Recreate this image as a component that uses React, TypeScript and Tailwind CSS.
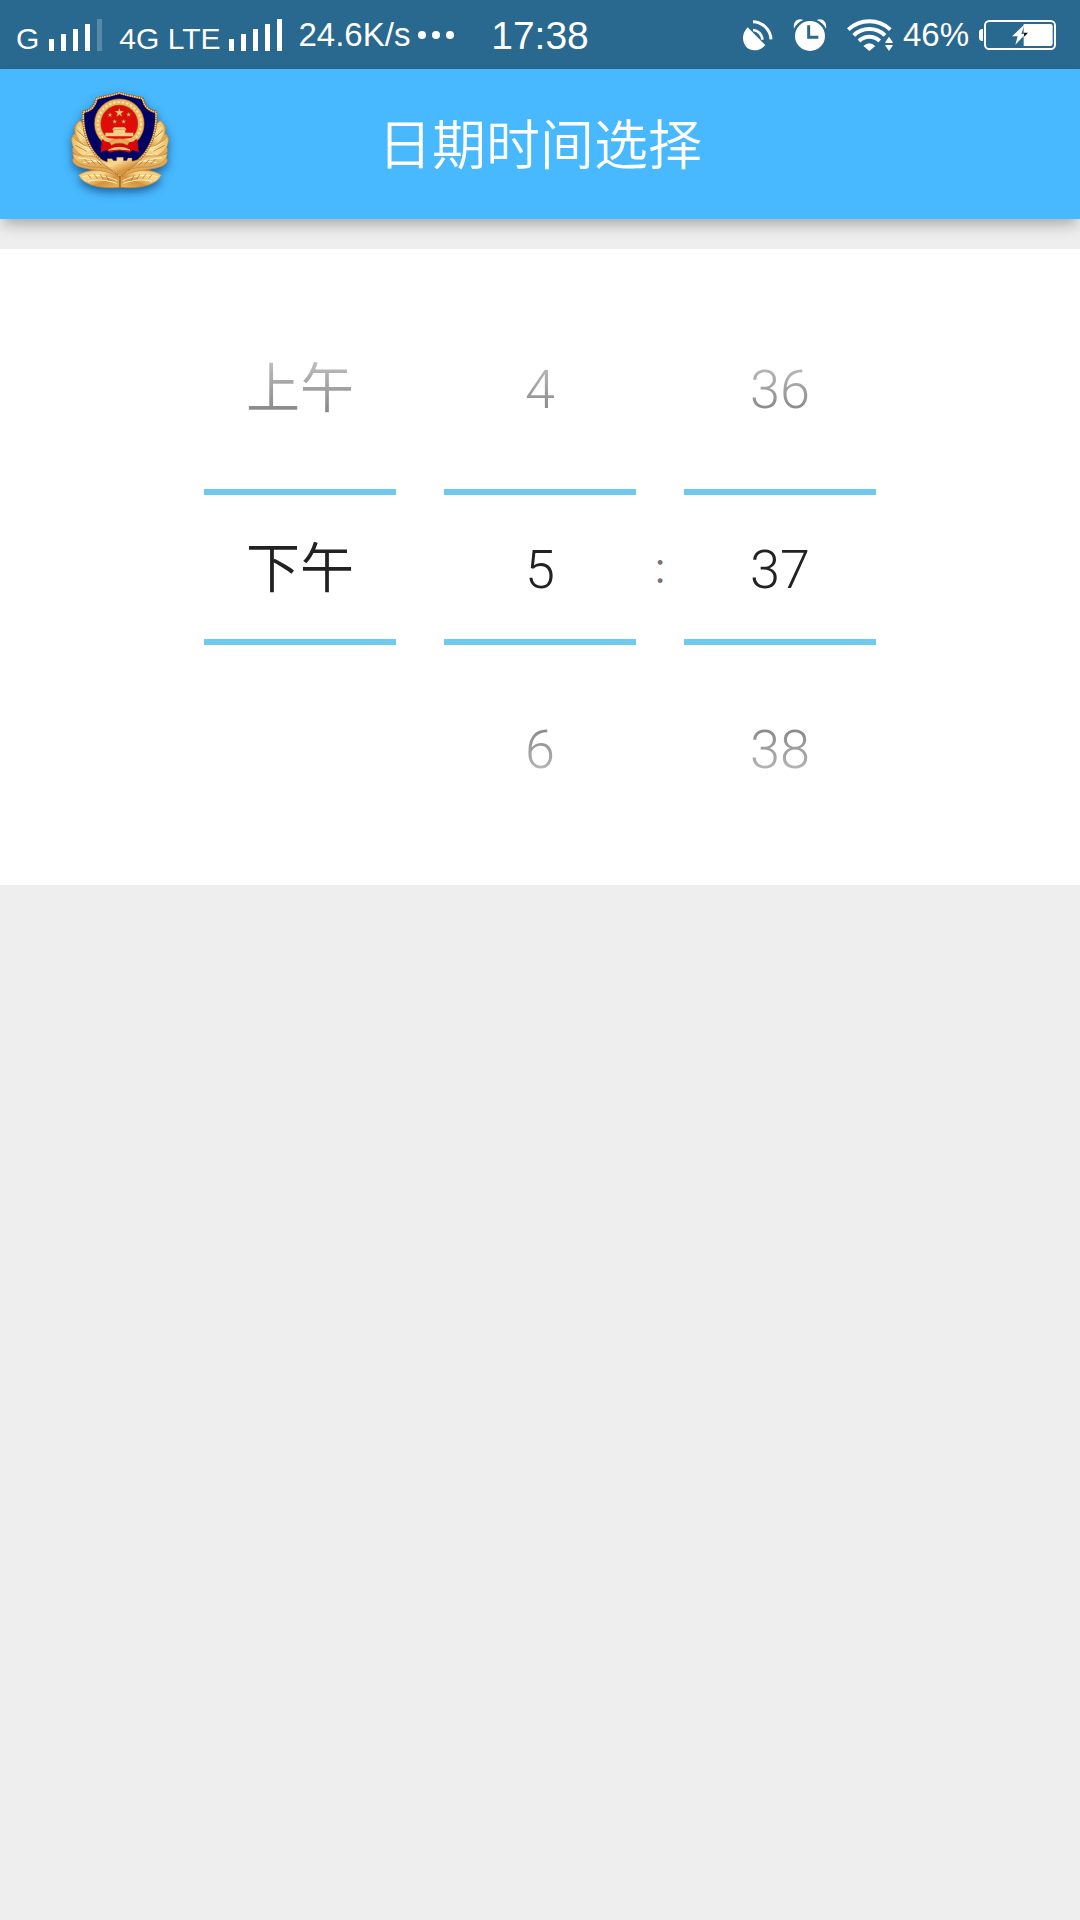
import React, { useState } from "react";

function SignalBars({ dimLast = false }: { dimLast?: boolean }) {
  return (
    <svg viewBox="0 0 54 32" className="h-8 w-[54px] shrink-0" fill="#fff" aria-hidden="true">
      <rect x="0" y="20" width="5" height="12" />
      <rect x="12" y="15" width="5" height="17" />
      <rect x="24" y="10" width="5" height="22" />
      <rect x="36" y="5" width="5" height="27" />
      <rect x="48" y="0" width="5" height="32" fillOpacity={dimLast ? 0.22 : 1} />
    </svg>
  );
}

function DishIcon() {
  return (
    <svg viewBox="0 0 90 96" className="h-8 w-[30px] shrink-0" aria-hidden="true">
      <path d="M14 25 L67 78 C50 98 24 98 10 84 C-4 68 -4 44 14 25Z" fill="#fff" />
      <path d="M30 33 A30 30 0 0 1 58 62" fill="none" stroke="#fff" strokeWidth="8" />
      <path d="M30 8 A56 56 0 0 1 84 61" fill="none" stroke="#fff" strokeWidth="9" />
    </svg>
  );
}

function AlarmIcon() {
  return (
    <svg viewBox="0 0 102 96" className="h-8 w-[34px] shrink-0" aria-hidden="true">
      <circle cx="51" cy="51" r="45" fill="#fff" />
      <path d="M47 19v36h29" fill="none" stroke="#29688f" strokeWidth="9" />
      <path d="M3 29 C-1 8 14 -4 31 3 C18 8 9 17 3 29Z" fill="#fff" />
      <path d="M99 29 C103 8 88 -4 71 3 C84 8 93 17 99 29Z" fill="#fff" />
    </svg>
  );
}

function WifiIcon() {
  return (
    <svg viewBox="0 0 138 96" className="h-8 w-[46px] shrink-0" aria-hidden="true">
      <g fill="none" stroke="#fff" strokeWidth="12">
        <path d="M4 32 A92 92 0 0 1 130 32" />
        <path d="M20 49 A68 68 0 0 1 114 49" />
        <path d="M36 66 A44 44 0 0 1 98 66" />
      </g>
      <path d="M49 81 Q67 64 85 81 L67 96Z" fill="#fff" />
      <path d="M126 53 L137 69 V72 H115 V69Z M115 78 H137 V80 L126 96 L115 80Z" fill="#fff" />
    </svg>
  );
}

function BatteryIcon() {
  return (
    <svg viewBox="0 0 231 90" className="h-[30px] w-[77px] shrink-0" aria-hidden="true">
      <path d="M12 27 V63 Q0 63 0 53 V37 Q0 27 12 27Z" fill="#fff" />
      <rect x="18" y="3" width="210" height="84" rx="13" fill="none" stroke="#fff" strokeWidth="6" />
      <path d="M134 12 H214 Q221 12 221 19 V71 Q221 78 214 78 H134Z" fill="#fff" />
      <path d="M134 16 L99 49 H116 L109 74 L140 42 H127 L136 16Z" fill="#fff" />
      <path d="M134 38 H147 L136 50Z" fill="#111" />
    </svg>
  );
}

function Star({ x, y, r }: { x: number; y: number; r: number }) {
  const points = Array.from({ length: 10 }, (_, i) => {
    const a = -Math.PI / 2 + (i * Math.PI) / 5;
    const d = i % 2 ? r * 0.4 : r;
    return `${x + d * Math.cos(a)},${y + d * Math.sin(a)}`;
  }).join(" ");
  return <polygon points={points} fill="#f0c070" stroke="#8a4410" strokeWidth="1" />;
}

const wing = (
  <g stroke="#c98a3a" strokeWidth="2">
    <path d="M90 152 C72 164 72 176 76 190 C62 200 62 214 74 226 C62 240 66 250 84 258 C60 262 64 282 88 290 C130 304 180 300 208 324 C200 280 150 220 104 176Z" fill="#e2a854" />
    <path d="M90 152 C70 168 72 190 88 212 C104 232 140 250 160 262 L120 180Z" fill="url(#gold)" />
    <path d="M68 197 C58 222 76 248 104 260 C140 272 180 290 206 318 C190 270 140 232 104 226 C90 220 76 212 68 197Z" fill="url(#gold)" />
    <path d="M68 250 C72 284 110 292 150 292 C178 294 196 304 208 322 C196 280 150 258 110 258 C92 258 76 256 68 250Z" fill="url(#goldDeep)" />
    <path d="M86 316 C110 296 164 296 208 322 V352 C160 356 104 350 86 316Z" fill="url(#gold)" />
    <g fill="none" stroke="#fff2c0" strokeWidth="3">
      <path d="M84 172l22 20 M82 188l28 22 M80 216l30 18 M94 240l40 -2 M112 254l38 -4" />
      <path d="M84 264c36 2 80 10 112 36 M100 278c26 -6 44 -6 62 0" />
      <path d="M98 320c34 -8 70 -4 104 12 M114 334c28 -8 56 -4 86 6" />
    </g>
    <g fill="none" stroke="#a8651c" strokeWidth="2">
      <path d="M80 180l24 22 M76 226l34 18 M104 268l14 14 M122 268l14 16 M140 272l14 14" />
      <path d="M114 314l10 12 M132 312l10 14 M150 312l10 16 M168 316l8 16" />
    </g>
  </g>
);

const shield =
  "M208 69 C188 76 162 80 140 86 C136 108 124 122 100 126 C98 160 104 200 122 232 C140 268 180 292 209 318 C238 292 278 268 296 232 C314 200 320 160 318 126 C294 122 282 108 278 86 C256 80 230 76 208 69Z";

function PoliceEmblem() {
  return (
    <svg
      viewBox="60 60 300 300"
      className="mb-2 size-[100px] shrink-0 overflow-visible drop-shadow-[0_4px_4px_rgba(0,40,90,0.6)]"
      role="img"
      aria-label="警徽"
    >
      <defs>
        <linearGradient id="gold" x1="0" y1="0" x2="1" y2="1">
          <stop offset="0" stopColor="#eebc62" />
          <stop offset="0.35" stopColor="#f8da92" />
          <stop offset="0.65" stopColor="#d6923c" />
          <stop offset="1" stopColor="#f0b95a" />
        </linearGradient>
        <linearGradient id="goldDeep" x1="0" y1="0" x2="0" y2="1">
          <stop offset="0" stopColor="#f8d486" />
          <stop offset="1" stopColor="#c98435" />
        </linearGradient>
      </defs>
      {wing}
      <g transform="matrix(-1 0 0 1 420 0)">{wing}</g>
      <path d={shield} fill="#020266" stroke="#8b4d16" strokeWidth="7" />
      <path d={shield} fill="none" stroke="#f4cf84" strokeWidth="5" strokeDasharray="5 2" />
      <path
        d="M144 266 L172 276 V266 H186 L190 272 H200 V262 H220 V272 H230 L234 264 H246 V274 L276 266 C254 288 230 300 209 318 C190 300 164 288 144 266Z"
        fill="url(#gold)"
        stroke="#b9772c"
        strokeWidth="1"
      />
      <circle cx="208" cy="161" r="65" fill="#e00c08" stroke="#a5631d" strokeWidth="21" />
      <circle cx="208" cy="161" r="65" fill="none" stroke="#eab868" strokeWidth="17" />
      <circle cx="208" cy="161" r="65" fill="none" stroke="#fbe5a8" strokeWidth="6" strokeDasharray="7 6" />
      <Star x={208} y={128} r={15} />
      <Star x={180} y={135} r={8} />
      <Star x={236} y={134} r={8} />
      <Star x={194} y={155} r={8} />
      <Star x={221} y={155} r={8} />
      <path d="M192 172 H224 L230 179 H186Z M190 180 H226 V188 H250 V199 H166 V188 H190Z" fill="#f6d088" />
      <path d="M156 208 C176 214 240 214 262 208 L266 246 L248 240 L238 248 C220 240 196 240 180 248 L170 240 L152 246Z" fill="#d80808" />
      <path d="M156 200 C190 208 226 208 260 200 L252 214 C226 222 190 222 164 214Z" fill="#eebf70" />
      <path d="M178 216 Q208 196 238 216 L232 226 Q208 212 184 226Z" fill="#e7ac55" stroke="#b5541c" strokeWidth="1" />
      <path d="M176 240 Q208 224 240 240 Q208 234 176 240Z" fill="#f3c778" stroke="#f3c778" strokeWidth="3" />
      <path d="M209 318 V352" stroke="#b36d20" strokeWidth="3" />
    </svg>
  );
}

function StatusBar() {
  return (
    <div className="flex h-[69px] items-center bg-[#29688f] pr-6 pl-4 font-['Liberation_Sans',sans-serif] text-white">
      <div className="flex flex-1 items-center gap-4">
        <div className="flex items-center gap-2.5">
          <span className="pt-2 text-[30px] leading-8">G</span>
          <SignalBars dimLast />
        </div>
        <div className="flex items-center gap-2">
          <span className="pt-2 text-[30px] leading-8">4G LTE</span>
          <SignalBars />
        </div>
        <div className="flex items-center gap-2">
          <span className="text-[33px] leading-10">24.6K/s</span>
          <svg viewBox="0 0 36 8" className="h-2 w-9" fill="#fff" aria-hidden="true">
            <circle cx="4" cy="4" r="4" />
            <circle cx="18" cy="4" r="4" />
            <circle cx="32" cy="4" r="4" />
          </svg>
        </div>
      </div>
      <span className="pt-0.5 pl-2 text-[39px] leading-10">17:38</span>
      <div className="flex flex-1 items-center justify-end gap-5">
        <DishIcon />
        <AlarmIcon />
        <div className="flex items-center gap-2.5">
          <WifiIcon />
          <span className="text-[33px] leading-10">46%</span>
          <BatteryIcon />
        </div>
      </div>
    </div>
  );
}

type WheelProps = { label: string; values: string[]; value: string; onChange: (v: string) => void };

function Wheel({ label, values, value, onChange }: WheelProps) {
  const i = values.indexOf(value);
  const prev = values[i - 1];
  const next = values[i + 1];
  return (
    <div role="group" aria-label={label} className="flex w-48 flex-col">
      <div className="flex h-[180px] items-center justify-center pt-1.5">
        {prev && (
          <button
            onClick={() => onChange(prev)}
            className="bg-linear-to-b from-[#c0c0c0] to-[#808080] bg-clip-text leading-[60px] text-transparent"
          >
            {prev}
          </button>
        )}
      </div>
      <output className="my-3 flex h-[156px] items-center justify-center border-y-6 border-[#6fcaed] pt-1.5 text-[#222]">
        {value}
      </output>
      <div className="flex h-[180px] items-center justify-center pt-1.5">
        {next && (
          <button
            onClick={() => onChange(next)}
            className="bg-linear-to-b from-[#808080] to-[#c0c0c0] bg-clip-text leading-[60px] text-transparent"
          >
            {next}
          </button>
        )}
      </div>
    </div>
  );
}

const periods = ["上午", "下午"];
const hours = Array.from({ length: 12 }, (_, i) => String(i + 1));
const minutes = Array.from({ length: 60 }, (_, i) => String(i).padStart(2, "0"));

export default function App() {
  const [period, setPeriod] = useState("下午");
  const [hour, setHour] = useState("5");
  const [minute, setMinute] = useState("37");
  return (
    <div className="min-h-screen bg-[#eee] font-['Roboto','Noto_Sans_CJK_SC',sans-serif] font-[350]">
      <StatusBar />
      <header className="grid h-[150px] grid-cols-[1fr_auto_1fr] items-center bg-[#48b8ff] px-[70px] shadow-[0_8px_14px_-3px_rgba(0,0,0,0.3)]">
        <PoliceEmblem />
        <h1 className="pt-1.5 text-[54px] leading-[60px] text-white">日期时间选择</h1>
      </header>
      <main className="mt-[30px] flex justify-center bg-white py-12 text-[54px] leading-[60px]">
        <Wheel label="时段" values={periods} value={period} onChange={setPeriod} />
        <div className="w-12" />
        <Wheel label="小时" values={hours} value={hour} onChange={setHour} />
        <span className="flex w-12 items-center justify-center pt-1 text-[42px] font-normal text-[#757575]">:</span>
        <Wheel label="分钟" values={minutes} value={minute} onChange={setMinute} />
      </main>
    </div>
  );
}
